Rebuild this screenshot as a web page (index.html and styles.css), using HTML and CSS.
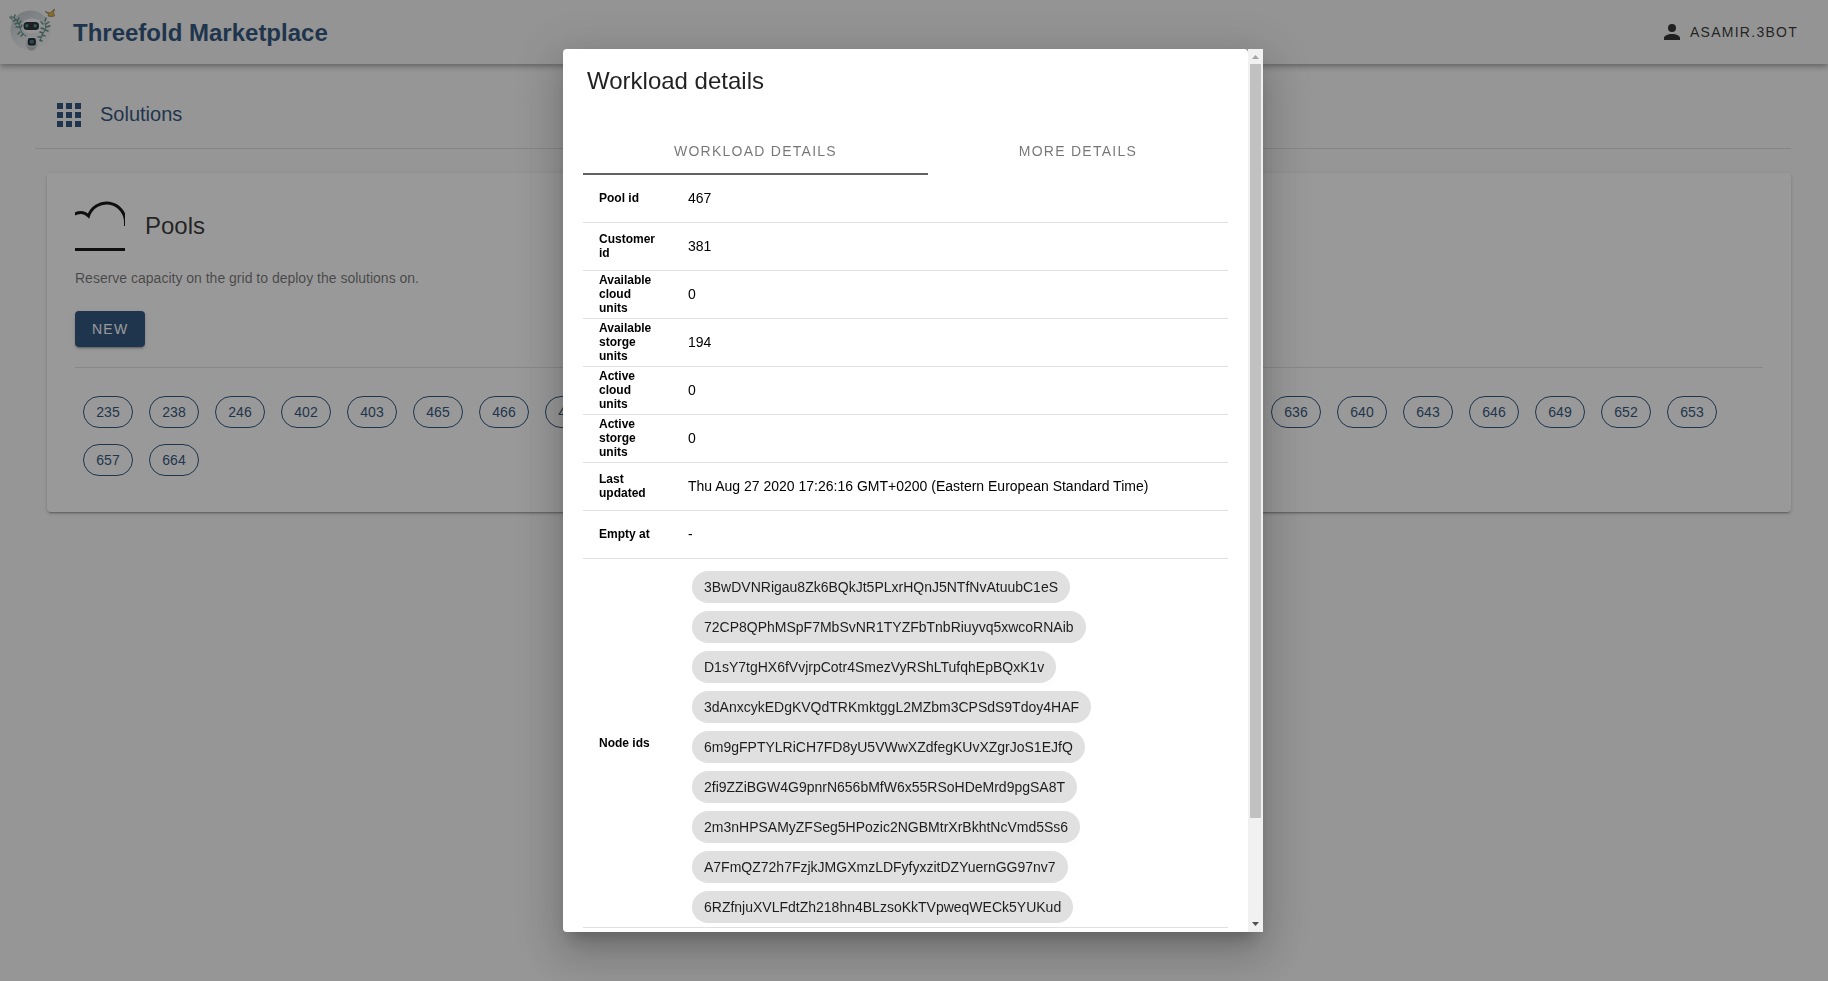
FILE: index.html
```
<!DOCTYPE html>
<html lang="en">
<head>
<meta charset="utf-8">
<title>Threefold Marketplace</title>
<link rel="stylesheet" href="styles.css">
</head>
<body>
<header class="app-bar">
  <svg class="logo" viewBox="0 0 50 50" aria-hidden="true">
    <defs>
      <linearGradient id="disc" x1="0.2" y1="0" x2="0.8" y2="1">
        <stop offset="0" stop-color="#bcc6cb"/>
        <stop offset="0.55" stop-color="#e2e6e8"/>
        <stop offset="1" stop-color="#f5f5f5"/>
      </linearGradient>
      <linearGradient id="body" x1="0" y1="0" x2="0" y2="1">
        <stop offset="0" stop-color="#f6f7f8"/>
        <stop offset="1" stop-color="#aeb6bb"/>
      </linearGradient>
    </defs>
    <circle cx="23.500" cy="23.500" r="20" fill="url(#disc)"/>
    <path d="M18 13Q25 10 32 13Q37 18 33 24Q25 29 17 24Q13 18 18 13Z" fill="#f7f8f9"/>
    <rect x="16.500" y="15" width="15.500" height="8" rx="3.500" fill="#1d1f25"/>
    <circle cx="19.800" cy="18.800" r="1.700" fill="#2f8f80"/>
    <circle cx="28.200" cy="18.800" r="1.700" fill="#2f8f80"/>
    <path d="M19 32Q24.500 27 30 32Q32 38 28 42Q24.500 45 21 42Q17 38 19 32Z" fill="url(#body)"/>
    <rect x="20.800" y="31" width="8" height="7.500" rx="2" fill="#14161c"/>
    <rect x="22.800" y="33" width="4" height="3.500" fill="#2d6f8c"/>
    <g fill="none" stroke="#6a9c8c" stroke-width="1.100" stroke-linecap="round">
      <path d="M4 9Q11 12 13 20Q14 27 19 29"/>
      <path d="M38 16Q40 22 36 26Q34 31 33 34"/>
    </g>
    <g fill="none" stroke="#55877a" stroke-width="1.400" stroke-linecap="round">
      <path d="M3 10L5 12M7 11L8 8M6 14L9 13M10 14L12 11M8 17L11 16M12 17L14 14M9 20L12 20M13 21L15 18M13 25L11 27M16 27L14 29"/>
      <path d="M38 14L39 11M39 17L42 15M36 17L34 15M39 20L43 19M37 22L34 21M38 23L41 24M36 26L33 25M35 28L38 29M34 30L31 30M33 33L35 34"/>
    </g>
    <path d="M38 4.500L43 6L47.500 2L46.500 6L47.500 9L44 9.500L41 9L41.500 7Z" fill="#e0b22c" stroke="#6d5520" stroke-width="0.600"/>
  </svg>
  <h1 class="brand">Threefold Marketplace</h1>
  <button class="account" type="button">
    <svg class="account-icon" viewBox="0 0 24 24" aria-hidden="true"><path d="M12 4A4 4 0 0 1 16 8A4 4 0 0 1 12 12A4 4 0 0 1 8 8A4 4 0 0 1 12 4M12 14C16.420 14 20 15.790 20 18V20H4V18C4 15.790 7.580 14 12 14Z"/></svg>
    <span>asamir.3bot</span>
  </button>
</header>

<main class="page">
  <div class="section-head">
    <svg class="section-icon" viewBox="0 0 24 24" aria-hidden="true"><path d="M0 0h6v6H0zM9 0h6v6H9zM18 0h6v6h-6zM0 9h6v6H0zM9 9h6v6H9zM18 9h6v6h-6zM0 18h6v6H0zM9 18h6v6H9zM18 18h6v6h-6z"/></svg>
    <h2 class="section-title">Solutions</h2>
  </div>
  <section class="card">
    <div class="card-head">
      <svg class="card-icon" viewBox="0 0 50 50" aria-hidden="true">
        <path d="M-4 16Q0 11.500 6 11.500Q10 11.500 13.500 15A19 19 0 0 1 50.500 21V25M0 48.500H50" fill="none" stroke="#000" stroke-width="3"/>
      </svg>
      <h3 class="card-title">Pools</h3>
    </div>
    <p class="card-text">Reserve capacity on the grid to deploy the solutions on.</p>
    <button class="new-button" type="button">New</button>
    <hr class="divider">
    <div class="pools">
      <button type="button" class="pool">235</button><button type="button" class="pool">238</button><button type="button" class="pool">246</button><button type="button" class="pool">402</button><button type="button" class="pool">403</button><button type="button" class="pool">465</button><button type="button" class="pool">466</button><button type="button" class="pool">467</button><button type="button" class="pool">470</button><button type="button" class="pool">482</button><button type="button" class="pool">495</button><button type="button" class="pool">503</button><button type="button" class="pool">528</button><button type="button" class="pool">546</button><button type="button" class="pool">570</button><button type="button" class="pool">598</button><button type="button" class="pool">612</button><button type="button" class="pool">625</button><button type="button" class="pool">636</button><button type="button" class="pool">640</button><button type="button" class="pool">643</button><button type="button" class="pool">646</button><button type="button" class="pool">649</button><button type="button" class="pool">652</button><button type="button" class="pool">653</button><button type="button" class="pool">657</button><button type="button" class="pool">664</button>
    </div>
  </section>
</main>

<div class="overlay">
  <div class="dialog" role="dialog" aria-modal="true" aria-labelledby="dialog-title">
    <div class="sheet">
      <h2 class="dialog-title" id="dialog-title">Workload details</h2>
      <div class="tabs" role="tablist">
        <button class="tab tab-active" type="button" role="tab" aria-selected="true">Workload details</button>
        <button class="tab" type="button" role="tab" aria-selected="false">More details</button>
      </div>
      <table class="details">
        <tbody>
          <tr><th scope="row">Pool id</th><td>467</td></tr>
          <tr><th scope="row">Customer id</th><td>381</td></tr>
          <tr><th scope="row">Available cloud units</th><td>0</td></tr>
          <tr><th scope="row">Available storge units</th><td>194</td></tr>
          <tr><th scope="row">Active cloud units</th><td>0</td></tr>
          <tr><th scope="row">Active storge units</th><td>0</td></tr>
          <tr><th scope="row">Last updated</th><td>Thu Aug 27 2020 17:26:16 GMT+0200 (Eastern European Standard Time)</td></tr>
          <tr><th scope="row">Empty at</th><td>-</td></tr>
          <tr><th scope="row">Node ids</th><td class="nodes-cell">
            <ul class="nodes">
              <li class="node">3BwDVNRigau8Zk6BQkJt5PLxrHQnJ5NTfNvAtuubC1eS</li>
              <li class="node">72CP8QPhMSpF7MbSvNR1TYZFbTnbRiuyvq5xwcoRNAib</li>
              <li class="node">D1sY7tgHX6fVvjrpCotr4SmezVyRShLTufqhEpBQxK1v</li>
              <li class="node">3dAnxcykEDgKVQdTRKmktggL2MZbm3CPSdS9Tdoy4HAF</li>
              <li class="node">6m9gFPTYLRiCH7FD8yU5VWwXZdfegKUvXZgrJoS1EJfQ</li>
              <li class="node">2fi9ZZiBGW4G9pnrN656bMfW6x55RSoHDeMrd9pgSA8T</li>
              <li class="node">2m3nHPSAMyZFSeg5HPozic2NGBMtrXrBkhtNcVmd5Ss6</li>
              <li class="node">A7FmQZ72h7FzjkJMGXmzLDFyfyxzitDZYuernGG97nv7</li>
              <li class="node">6RZfnjuXVLFdtZh218hn4BLzsoKkTVpweqWECk5YUKud</li>
            </ul>
          </td></tr>
        </tbody>
      </table>
    </div>
    <div class="scrollbar" aria-hidden="true">
      <svg class="scroll-arrow" viewBox="0 0 15 15"><path d="M4 10L7.500 6L11 10Z" fill="#a3a3a3"/></svg>
      <div class="scroll-track"><div class="scroll-thumb"></div></div>
      <svg class="scroll-arrow" viewBox="0 0 15 15"><path d="M4 5L7.500 9L11 5Z" fill="#505050"/></svg>
    </div>
  </div>
</div>
</body>
</html>
```
FILE: styles.css
```
* { box-sizing: border-box; }

body {
  margin: 0;
  min-height: 100vh;
  background: #fafafa;
  color: rgba(0, 0, 0, 0.87);
  font-family: "Liberation Sans", Arial, sans-serif;
  font-size: 14px;
  overflow: hidden;
}

h1, h2, h3, p, ul { margin: 0; padding: 0; font-weight: 400; }

button {
  border: 0;
  background: none;
  color: inherit;
  font: inherit;
  cursor: pointer;
}

.app-bar {
  position: relative;
  display: flex;
  align-items: center;
  height: 64px;
  padding: 0 30px 0 7px;
  background: #f5f5f5;
  box-shadow: 0 2px 4px -1px rgba(0, 0, 0, 0.2), 0 4px 5px rgba(0, 0, 0, 0.14), 0 1px 10px rgba(0, 0, 0, 0.12);
}

.logo { width: 50px; height: 50px; }

.brand {
  padding-top: 2px;
  margin-left: 16px;
  color: #1d4773;
  font-size: 24px;
  font-weight: 700;
  line-height: 32px;
}

.account {
  display: flex;
  align-items: center;
  gap: 6px;
  margin-left: auto;
  padding: 0;
  letter-spacing: 0.09em;
  text-transform: uppercase;
}

.account-icon { width: 24px; height: 24px; fill: currentColor; }

.page { padding: 22px 37px 0 35px; }

.section-head {
  display: flex;
  align-items: center;
  gap: 19px;
  height: 63px;
  padding: 0 22px 4px;
  border-bottom: 1px solid rgba(0, 0, 0, 0.12);
  color: #1d4773;
}

.section-icon { width: 24px; height: 24px; fill: currentColor; }

.section-title { padding-bottom: 2px; font-size: 20px; line-height: 32px; }

.card {
  margin: 24px 0 0 12px;
  padding: 28px;
  border-radius: 4px;
  background: #fff;
  box-shadow: 0 3px 1px -2px rgba(0, 0, 0, 0.2), 0 2px 2px rgba(0, 0, 0, 0.14), 0 1px 5px rgba(0, 0, 0, 0.12);
}

.card-head { display: flex; align-items: center; gap: 20px; }

.card-icon { width: 50px; height: 50px; }

.card-title { font-size: 24px; line-height: 32px; }

.card-text {
  margin-top: 16px;
  color: rgba(0, 0, 0, 0.6);
  line-height: 22px;
}

.new-button {
  display: block;
  height: 36px;
  margin-top: 22px;
  padding: 0 17px;
  border-radius: 4px;
  background: #1d4773;
  color: #fff;
  letter-spacing: 0.09em;
  text-transform: uppercase;
  box-shadow: 0 3px 1px -2px rgba(0, 0, 0, 0.2), 0 2px 2px rgba(0, 0, 0, 0.14), 0 1px 5px rgba(0, 0, 0, 0.12);
}

.divider {
  height: 1px;
  margin: 20px 0;
  border: 0;
  background: rgba(0, 0, 0, 0.12);
}

.pools { display: flex; flex-wrap: wrap; }

.pool {
  min-width: 50px;
  height: 32px;
  margin: 8px;
  padding: 0 12px;
  border: 1px solid #1d4773;
  border-radius: 16px;
  color: #1d4773;
}

.overlay {
  position: fixed;
  inset: 0;
  display: flex;
  align-items: center;
  justify-content: center;
  padding-right: 2px;
  background: rgba(33, 33, 33, 0.46);
}

.dialog {
  display: flex;
  width: 700px;
  max-width: 90%;
  height: 90%;
  border-radius: 4px;
  box-shadow: 0 11px 15px -7px rgba(0, 0, 0, 0.2), 0 24px 38px 3px rgba(0, 0, 0, 0.14), 0 9px 46px 8px rgba(0, 0, 0, 0.12);
}

.sheet {
  flex: 1;
  min-width: 0;
  padding: 16px 20px 0;
  border-radius: 4px 4px 0 4px;
  background: #fff;
  overflow-y: auto;
  scrollbar-width: none;
}

.dialog-title {
  padding: 0 4px;
  font-size: 24px;
  line-height: 32px;
}

.tabs { display: flex; margin-top: 30px; }

.tab {
  flex: 1 1 auto;
  height: 48px;
  padding: 0 16px;
  border: solid transparent;
  border-width: 2px 0;
  color: rgba(0, 0, 0, 0.54);
  letter-spacing: 0.09em;
  text-transform: uppercase;
}

.tab-active { border-bottom-color: #606164; }

.details {
  width: 100%;
  border-collapse: separate;
  border-spacing: 0;
  color: #000;
}

.details th,
.details td {
  height: 48px;
  padding: 0 16px 1px;
  border-bottom: 1px solid rgba(0, 0, 0, 0.12);
  text-align: left;
  vertical-align: middle;
}

.details th { width: 89px; font-size: 12px; line-height: 14px; }

.details .nodes-cell { padding: 8px 16px 0; }

.nodes {
  display: flex;
  flex-direction: column;
  align-items: flex-start;
  list-style: none;
}

.node {
  margin: 4px;
  padding: 0 12px;
  border-radius: 16px;
  background: #e0e0e0;
  color: rgba(0, 0, 0, 0.87);
  line-height: 32px;
}

.scrollbar {
  display: flex;
  flex-direction: column;
  width: 15px;
  background: #f1f1f1;
}

.scroll-arrow { width: 15px; height: 15px; }

.scroll-track { flex: 1; padding: 0 2px; }

.scroll-thumb { height: 88.4%; background: #c1c1c1; }
```
